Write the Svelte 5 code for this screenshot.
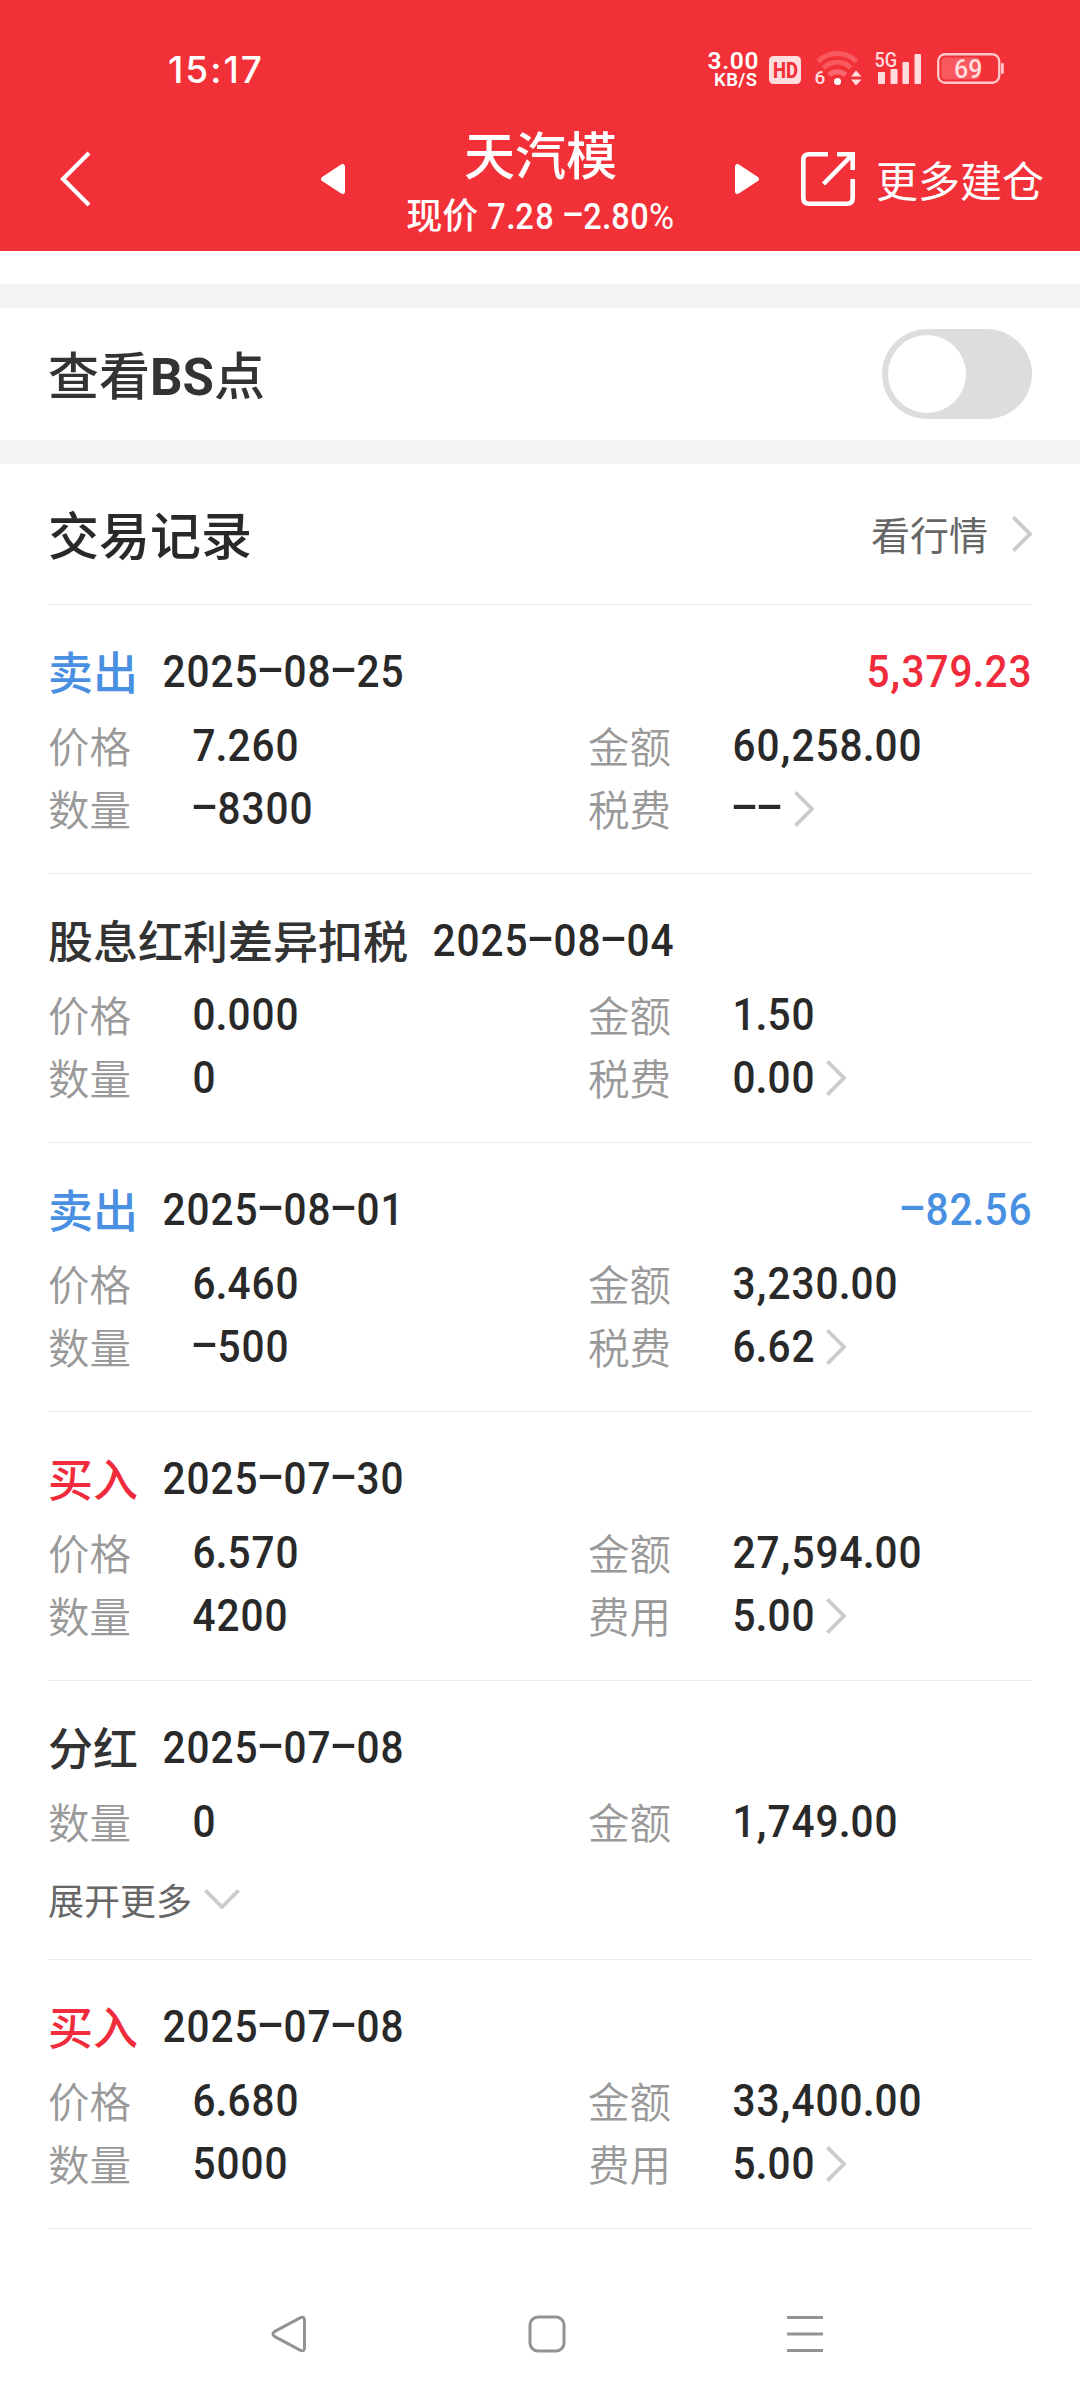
<script>
  let showPoints = false;

  const records = [
    {
      type: '卖出', kind: 'sell', date: '2025-08-25', profit: '5,379.23', trend: 'up',
      rows: [['价格', '7.260', '金额', '60,258.00'], ['数量', '-8300', '税费', '--']]
    },
    {
      type: '股息红利差异扣税', kind: 'other', date: '2025-08-04',
      rows: [['价格', '0.000', '金额', '1.50'], ['数量', '0', '税费', '0.00']]
    },
    {
      type: '卖出', kind: 'sell', date: '2025-08-01', profit: '-82.56', trend: 'down',
      rows: [['价格', '6.460', '金额', '3,230.00'], ['数量', '-500', '税费', '6.62']]
    },
    {
      type: '买入', kind: 'buy', date: '2025-07-30',
      rows: [['价格', '6.570', '金额', '27,594.00'], ['数量', '4200', '费用', '5.00']]
    },
    {
      type: '分红', kind: 'other', date: '2025-07-08', more: true,
      rows: [['数量', '0', '金额', '1,749.00']]
    },
    {
      type: '买入', kind: 'buy', date: '2025-07-08',
      rows: [['价格', '6.680', '金额', '33,400.00'], ['数量', '5000', '费用', '5.00']]
    }
  ];

  function cell(ch) {
    if (ch === '-') return 'dash';
    if (ch === '.' || ch === ',') return 'dot';
    if (ch === '%') return 'percent';
    return 'digit';
  }
</script>

<!-- every character sits in a fixed cell, so that figures line up -->
{#snippet num(value)}
  <span class="num">{#each value as ch}<span class={cell(ch)}>{ch}</span>{/each}</span>
{/snippet}

{#snippet chevron()}
  <svg class="chevron" width="20" height="36" viewBox="0 0 20 36">
    <path d="M1.4 1.4 L18 18 L1.4 34.6" fill="none" stroke="#ccc" stroke-width="3.8" />
  </svg>
{/snippet}

<main>
  <header>
    <div class="status">
      <span class="time">15:17</span>
      <svg class="indicators" width="310" height="50" viewBox="700 44 310 50">
        <g class="status-text speed" fill="#fff">
          <text x="707.5" y="69" font-size="24.5" textLength="51">3.00</text>
          <text x="714" y="86" font-size="18.5" textLength="43">KB/S</text>
        </g>
        <rect x="769" y="56" width="32" height="28" rx="4.5" fill="#ffdcde" />
        <text class="hd" x="773" y="78" font-size="22" textLength="25" lengthAdjust="spacingAndGlyphs">HD</text>
        <g fill="none" stroke="#f8595f" stroke-width="5">
          <path d="M818 61.5 A27 27 0 0 1 856.5 61.5" />
          <path d="M823.5 68 A19.5 19.5 0 0 1 851 68" />
          <path d="M829 75 A12 12 0 0 1 845.5 75" stroke="#f8696f" />
        </g>
        <circle cx="837.5" cy="81.5" r="3.5" fill="#fff" />
        <text class="status-text" x="814.5" y="84" font-size="19" fill="#ffdcde">6</text>
        <path d="M851 76.5 L856 70.5 L861.5 76.5 Z M851 79.5 L861.5 79.5 L856 85.5 Z" fill="#ffdcde" />
        <text class="status-text" x="874.5" y="67" font-size="21" fill="#ffdcde" textLength="22.5" lengthAdjust="spacingAndGlyphs">5G</text>
        <g fill="#ffdcde">
          <rect x="878" y="72" width="7" height="12" rx="1" />
          <rect x="890.5" y="69" width="7" height="15" rx="1" />
          <rect x="902.5" y="62" width="6.5" height="22" rx="1" />
          <rect x="914.5" y="54" width="6.5" height="30" rx="1" />
        </g>
        <rect x="938.2" y="54.2" width="61" height="28.6" rx="7" fill="none" stroke="#ffc6c8" stroke-width="2.4" />
        <rect x="941.5" y="57.5" width="38" height="22" rx="4" fill="#f8595f" />
        <rect x="1001" y="63" width="2.8" height="11" rx="1.2" fill="#ffc6c8" />
        <text class="status-text" x="954" y="77.5" font-size="25" fill="#ffdcde">69</text>
      </svg>
    </div>

    <nav class="title-bar">
      <svg class="back" width="32" height="56" viewBox="0 0 32 56">
        <path d="M30 2 L4 28 L30 54" fill="none" stroke="#fff" stroke-width="4.2" />
      </svg>
      <svg class="arrow" width="24" height="30" viewBox="0 0 24 30">
        <path d="M2.5 15 L21.5 2.5 V27.5 Z" fill="#fff" stroke="#fff" stroke-width="5" stroke-linejoin="round" />
      </svg>
      <div class="stock">
        <h1>天汽模</h1>
        <p>现价 {@render num('7.28')} {@render num('-2.80%')}</p>
      </div>
      <svg class="arrow" width="24" height="30" viewBox="0 0 24 30">
        <path d="M21.5 15 L2.5 2.5 V27.5 Z" fill="#fff" stroke="#fff" stroke-width="5" stroke-linejoin="round" />
      </svg>
      <svg class="export" width="54" height="54" viewBox="0 0 54 54">
        <g fill="none" stroke="#fff" stroke-width="4.6">
          <path d="M27 2.3 H8 Q2.3 2.3 2.3 8 V46 Q2.3 51.7 8 51.7 H46 Q51.7 51.7 51.7 46 V27" />
          <path d="M36 2.3 H51.7 V18" />
          <path d="M22.5 32 L50.5 3.5" />
        </g>
      </svg>
      <span class="more-build">更多建仓</span>
    </nav>
  </header>

  <section class="switch-row">
    <h2 class="points">查看<b>BS</b>点</h2>
    <button class="toggle" class:on={showPoints} aria-label="查看BS点" on:click={() => (showPoints = !showPoints)}>
      <span class="knob"></span>
    </button>
  </section>

  <section class="records">
    <div class="records-head">
      <h2>交易记录</h2>
      <span class="quote">看行情</span>
      {@render chevron()}
    </div>

    {#each records as record}
      <article>
        <div class="record-head">
          <span class="type {record.kind}">{record.type}</span>
          {@render num(record.date)}
          {#if record.profit}
            <span class="profit {record.trend}">{@render num(record.profit)}</span>
          {/if}
        </div>
        {#each record.rows as [labelA, valueA, labelB, valueB], i}
          <div class="row">
            <span class="label">{labelA}</span>
            <span class="value">{@render num(valueA)}</span>
            <span class="label">{labelB}</span>
            <span class="value">{@render num(valueB)}{#if i === 1}{@render chevron()}{/if}</span>
          </div>
        {/each}
        {#if record.more}
          <div class="expand">
            <span>展开更多</span>
            <svg width="36" height="20" viewBox="0 0 36 20">
              <path d="M1.4 1.4 L18 18 L34.6 1.4" fill="none" stroke="#ccc" stroke-width="3.8" />
            </svg>
          </div>
        {/if}
      </article>
    {/each}
  </section>

  <footer>
    <svg width="36" height="38" viewBox="0 0 36 38">
      <path d="M3.4 16.6 L29.5 2.6 Q33.5 1.2 33.5 5 V33 Q33.5 36.8 29.5 35.4 L3.4 21.4 Q0.5 19 3.4 16.6 Z" />
    </svg>
    <svg width="38" height="38" viewBox="0 0 38 38">
      <rect x="2" y="2" width="34" height="34" rx="8" />
    </svg>
    <svg width="38" height="38" viewBox="0 0 38 38">
      <path d="M1 2.5 H37 M1 19 H37 M1 35.5 H37" />
    </svg>
  </footer>
</main>

<style>
  :global(body) {
    margin: 0;
    background: #fff;
  }

  main {
    display: flex;
    flex-direction: column;
    width: 1080px;
    height: 2400px;
    overflow: hidden;
    background: #fff;
    color: #292929;
    font-family: Roboto, 'Noto Sans CJK SC', sans-serif;
  }

  svg {
    display: block;
    flex: none;
  }

  h1,
  h2,
  p {
    margin: 0;
    font-weight: 500;
  }

  header {
    height: 251px;
    margin-bottom: 33px;
    background: #f23038;
    color: #fff;
  }

  .status {
    display: flex;
    align-items: center;
    justify-content: space-between;
    box-sizing: border-box;
    height: 102px;
    padding: 36px 70px 0 168px;
  }

  .time {
    font-family: Inter, sans-serif;
    font-size: 37px;
    font-weight: 500;
    letter-spacing: 2px;
    line-height: 1;
  }

  .status-text {
    font-family: Roboto, sans-serif;
    font-weight: 500;
  }

  .speed {
    font-weight: 600;
  }

  .hd {
    fill: #f23038;
    font-weight: 800;
  }

  .title-bar {
    display: flex;
    align-items: center;
    box-sizing: border-box;
    height: 149px;
    padding: 4px 0 0 59px;
  }

  .back {
    margin-right: 230px;
  }

  .stock {
    box-sizing: border-box;
    width: 390px;
    padding: 14px 0 0 1px;
    text-align: center;
    white-space: nowrap;
  }

  h1 {
    font-size: 51px;
    line-height: 62px;
  }

  .stock p {
    font-size: 36px;
    line-height: 56px;
  }

  .stock .num {
    font-size: 36px;
  }

  .export {
    margin: 0 21px 0 42px;
  }

  .more-build {
    padding-top: 8px;
    font-size: 42px;
    line-height: 60px;
  }

  .switch-row {
    display: flex;
    align-items: center;
    justify-content: space-between;
    height: 132px;
    padding: 0 48px;
    border-top: 24px solid #f4f4f4;
    border-bottom: 24px solid #f4f4f4;
  }

  h2 {
    padding-top: 8px;
    font-size: 51px;
    line-height: 70px;
  }

  .points {
    color: #333;
  }

  .points b {
    font-weight: 700;
  }

  .toggle {
    width: 150px;
    height: 90px;
    padding: 6px;
    border: 0;
    border-radius: 45px;
    background: #ddd;
  }

  .toggle.on {
    background: #f23038;
  }

  .knob {
    display: block;
    width: 78px;
    height: 78px;
    border-radius: 50%;
    background: #fff;
  }

  .toggle.on .knob {
    margin-left: auto;
  }

  .records {
    padding: 0 48px;
  }

  .records-head {
    display: flex;
    align-items: center;
    height: 140px;
    border-bottom: 1px solid #ebebeb;
  }

  .quote {
    margin: 0 24px 0 auto;
    padding-bottom: 2px;
    color: #666;
    font-size: 39px;
  }

  article {
    padding: 34px 0 33px;
    border-bottom: 1px solid #ebebeb;
  }

  article:has(.expand) {
    padding-bottom: 12px;
  }

  .record-head {
    display: flex;
    align-items: center;
    height: 64px;
    margin-bottom: 11px;
  }

  .type {
    margin-right: 24px;
    padding-top: 8px;
    color: #333;
    font-size: 45px;
    font-weight: 500;
    line-height: 64px;
  }

  .sell,
  .down {
    color: #4a90e2;
  }

  .buy,
  .up {
    color: #f02b3b;
  }

  .profit {
    margin-left: auto;
  }

  .num {
    font-size: 45px;
    font-weight: 500;
    white-space: nowrap;
  }

  .num span {
    display: inline-flex;
    justify-content: center;
  }

  .digit {
    width: 0.532em;
    transform: translateY(-0.01em) scaleX(0.9);
  }

  .dot {
    width: 0.252em;
  }

  .percent {
    width: 0.7em;
    font-weight: 400;
    transform: scaleX(0.95);
  }

  .dash {
    width: 0.563em;
    transform: translateY(-0.08em) scaleX(1.85);
  }

  .row {
    display: grid;
    grid-template-columns: 144px 396px 144px 1fr;
    grid-template-rows: 63px;
    align-items: center;
    height: 63px;
  }

  .label {
    padding-top: 5px;
    color: #999;
    font-size: 41.5px;
    font-weight: 350;
    line-height: 63px;
  }

  .value {
    display: flex;
    align-items: center;
    line-height: 63px;
  }

  .value .chevron {
    margin-left: 11px;
  }

  .expand {
    display: flex;
    align-items: center;
    gap: 12px;
    height: 91px;
    margin-bottom: 3px;
    color: #666;
    font-size: 36px;
  }

  footer {
    display: flex;
    align-items: center;
    justify-content: space-between;
    height: 38px;
    margin-top: 86px;
    padding: 0 256px 0 271px;
    fill: none;
    stroke: #939393;
    stroke-width: 3px;
  }
</style>
